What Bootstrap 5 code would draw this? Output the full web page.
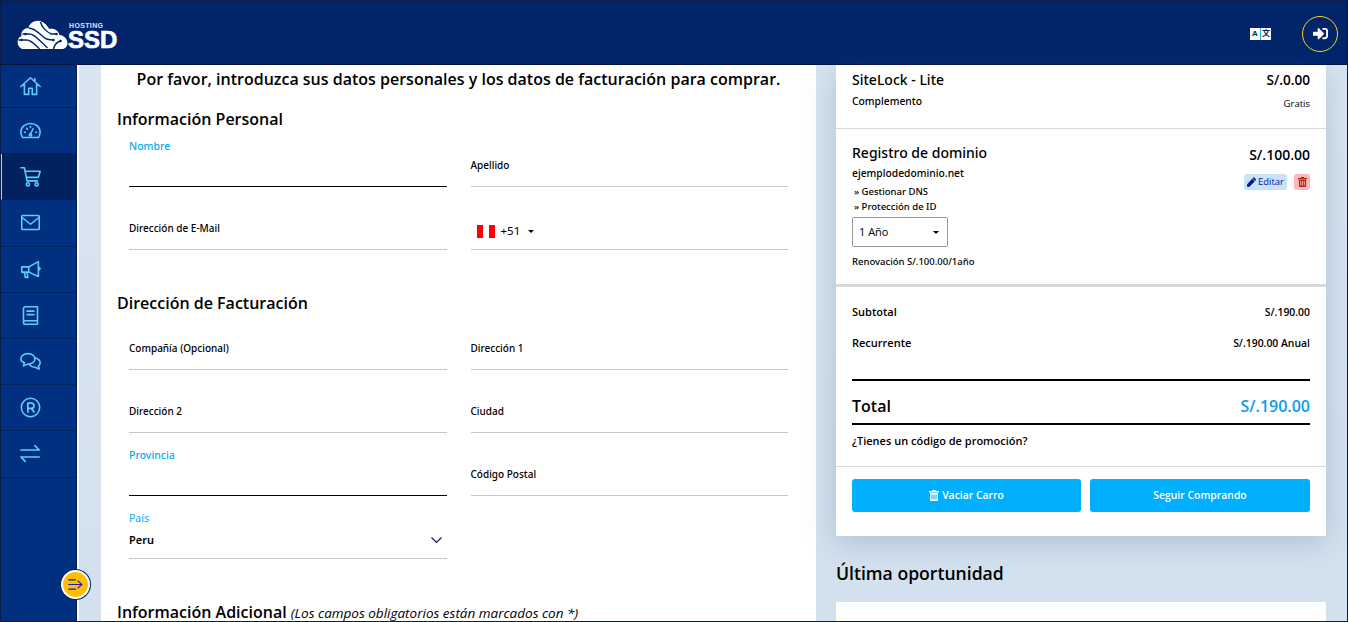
<!DOCTYPE html>
<html lang="es">
<head>
<meta charset="utf-8">
<title>Hosting SSD</title>
<link href="https://cdn.jsdelivr.net/npm/bootstrap@5.3.0/dist/css/bootstrap.min.css" rel="stylesheet">
<style>
html,body{height:622px;overflow:hidden}
body{font-family:"Open Sans","Noto Sans",sans-serif;color:#000;background:#d6e3ef}
.frame{height:622px;display:flex;flex-direction:column;border:1px solid #0b1d4a;overflow:hidden}
.topbar{height:64px;flex:none;background:#01246b;padding:2px 0 0;border-bottom:1px solid #00143f}
.logo-wrap{position:relative;display:flex;align-items:flex-end;margin-left:15px;height:30px;margin-top:1px}
.logo-host{position:absolute;left:53px;top:3px;font:700 7px/8px "Liberation Sans",sans-serif;color:#cfe6ff;letter-spacing:.35px}
.logo-ssd{font:700 24px/18px "Liberation Sans",sans-serif;color:#fff;letter-spacing:0;margin-left:-1px;-webkit-text-stroke:.7px #fff}
.lang{display:flex;width:21px;height:12px;background:#fff;font:700 8px/12px "Liberation Sans","Noto Sans CJK SC",sans-serif;color:#01246b;text-align:center;margin-right:31px}
.lang span{flex:1}
.lang span+span{border-left:1px solid #27b6e8}
.login{width:36px;height:36px;border:1.5px solid #ffd21e;border-radius:50%;display:flex;align-items:center;justify-content:center;margin-right:9px}
.below{flex:1;display:flex;min-height:0;position:relative}
.side{width:78px;flex:none;background:#00307f;border-right:2px solid #fff;box-shadow:inset -1px 0 0 #001f63}
.side .nav-link{height:46.2px;padding:0 0 0 19px;display:flex;align-items:center;border-bottom:1px solid #00225f}
.side .nav-link:first-child{height:43px}
.side .nav-link.active{background:#01225f;border-left:1px solid #ffd21e;padding-left:18px}
.side svg{width:21px;height:21px;fill:none;stroke:#5fcbff;stroke-width:1.8;stroke-linecap:round;stroke-linejoin:round}
.toggle{position:absolute;left:60px;top:505px;width:29px;height:29px;border-radius:50%;background:#ffbe00;border:2px solid #fff;box-shadow:0 0 0 1px #00225f;display:flex;align-items:center;justify-content:center}
.toggle svg{width:15px;height:11px;fill:none;stroke:#1420c8;stroke-width:1.3}
.content{flex:1;display:flex;min-width:0;padding-left:22px;background:linear-gradient(180deg,#d9e5f0,#d3e1ee)}
.panel{width:715px;flex:none;background:#fff;border:0;border-radius:0;padding:0 16px}
.page-lead{font-size:16px;font-weight:600;line-height:22px;text-align:center;margin:3px 0 0}
.sec-title{font-size:16px;font-weight:600;line-height:22px;margin:0}
.sec-title em{font-size:13.5px;font-weight:400}
.s1{margin-top:18px}.s2{margin-top:42px}.s3{margin-top:42px}
.r1{margin-top:-3px}.r2{margin-top:-7px}
.fld{height:63px;border-bottom:1px solid #c8c8c8;display:flex;align-items:flex-end;padding-bottom:14px;font-family:"Noto Sans","Open Sans",sans-serif;font-size:10px;font-weight:500;line-height:14px}
.fld.short{height:60px}
.fld.on{border-bottom-color:#000;padding-bottom:33px;color:#00aeef;font-size:10.5px}
.fld.pais{flex-direction:column;align-items:flex-start;justify-content:flex-end;padding-bottom:10px;color:#00aeef;font-weight:400;font-size:10.5px;position:relative}
.fld.pais b{color:#000;font-size:11px;font-weight:600;line-height:16px;margin-top:7px}
.chev{position:absolute;right:5px;bottom:14px;width:11px;height:7px;fill:none;stroke:#0b1d4a;stroke-width:1.2}
.fld.tel{align-items:center;padding:26px 0 0 6px;font-size:11.5px;font-weight:400;gap:6px}
.flag{display:flex;width:18px;height:13px}
.flag i{flex:1;background:#f00}
.flag i+i{background:#fff}
.flag i+i+i{background:#f00}
.caret{width:0;height:0;border:3px solid transparent;border-top-color:#000;border-bottom:0;margin-left:2px}
.aside{width:490px;flex:none;margin-left:20px}
.cart{border:0;border-radius:0;box-shadow:0 6px 28px rgba(70,100,140,.28);height:471px}
.itm{padding:0 16px;display:flex;justify-content:space-between;border-bottom:1px solid #d9d9d9}
.itm1{height:64px;padding-top:5px}
.itm2{height:158px;padding-top:14px;border-bottom:3px solid #d9d9d9}
.nm{font-family:"Noto Sans","Open Sans",sans-serif;font-size:14px;font-weight:500;line-height:20px}
.tiny{font-family:"Noto Sans","Open Sans",sans-serif;font-size:9.5px;line-height:14px;font-weight:500}
.tiny.wide{font-size:10.3px}
.pr{font-size:13.6px;font-weight:600;line-height:20px;text-align:right}
.pr.big{font-size:14px;margin-top:2px}
.gratis{font-size:9.5px;text-align:right;margin-top:7px}
.mini{display:inline-flex;align-items:center;gap:2px;height:16px;border-radius:3px;font-size:9.5px;padding:0 3px;background:#c5e3fb;color:#0a1a8a}
.mini.del{background:#ffb6bd;padding:0 3px;margin-left:7px;color:#b3260a;width:16px;justify-content:center}
.mini svg{width:9px;height:10px;fill:currentColor}
.btns{margin-top:4px}
.term{width:96px;height:30px;border:1px solid #999;border-radius:2px;display:flex;justify-content:space-between;align-items:center;padding:0 8px 0 6px;font-size:11px;margin:3px 0 8px;background:#fff}
.sums{padding:0 16px}
.sum{display:flex;justify-content:space-between;font-size:11px;font-weight:600;line-height:16px}
.sum small{font-size:10.4px;font-weight:600}
.sum1{margin-top:17px}.sum2{margin-top:15px}
.tot{display:flex;justify-content:space-between;align-items:center;border-top:2px solid #000;border-bottom:2px solid #000;height:46px;padding-top:8px;font-size:16px;font-weight:600;margin-top:28px}
.tot span+span{color:#0a9bf5}
.promo{font-size:11px;font-weight:600;line-height:16px;margin-top:8px;padding-bottom:17px}
.acts{border-top:1px solid #d9d9d9;padding:12px 16px 0;display:flex;gap:9px}
.act{height:33px;border:0;border-radius:3px;background:#00b0ff;color:#fff;font-size:10.4px;font-weight:600;padding:0;display:flex;align-items:center;justify-content:center;gap:3px}
.act svg{width:10px;height:11px;fill:#fff}
.a1{width:229px}.a2{width:220px}
.last-title{font-size:17.6px;font-weight:600;line-height:24px;margin:25px 0 17px}
.next{height:40px;background:#fff;border:0;border-radius:0}
.m3{margin-top:3px}.m4{margin:5px 0 0 2px}.m1{margin:1px 0 0 2px}
.mtc{margin-top:4px}
</style>
</head>
<body>
<div class="frame">
  <nav class="navbar topbar d-flex justify-content-between align-items-center">
    <div class="logo-wrap">
      <svg width="53" height="30" viewBox="0 0 52 30"><path d="M4 29C0 26 0 19 5 17 4 12 8 9 12 9 13 3 21 0 26 3c4 2 5 5 7 7 5-1 9 2 10 6 4 0 8 4 8 8 0 4-3 6-6 6H8c-2 0-3 0-4-1z" fill="#fff"/><g fill="none" stroke="#01246b" stroke-width="1.400"><path d="M2 21h8c4 0 7 3 10 6l3 3M6 15h7c5 0 9 6 14 10l4 4M12 9c6 0 10 5 15 9 3 3 6 3 10 3M24 3c1 5 6 10 11 12h5M44 22c-4 1-6 4-7 8"/></g><g fill="#01246b"><circle cx="5" cy="21" r="1.300"/><circle cx="9" cy="15" r="1.300"/><circle cx="37" cy="21" r="1.300"/><circle cx="40" cy="15" r="1.300"/><circle cx="44" cy="22" r="1.300"/></g></svg>
      <span class="logo-host">HOSTING</span>
      <span class="logo-ssd">SSD</span>
    </div>
    <div class="d-flex align-items-center">
      <div class="lang"><span>A</span><span>文</span></div>
      <div class="login"><svg width="17" height="15" viewBox="0 0 512 512" fill="#fff"><path d="M416 448h-84c-6.6 0-12-5.4-12-12v-40c0-6.6 5.4-12 12-12h84c17.7 0 32-14.3 32-32V160c0-17.7-14.3-32-32-32h-84c-6.6 0-12-5.4-12-12V76c0-6.6 5.4-12 12-12h84c53 0 96 43 96 96v192c0 53-43 96-96 96zm-47-201L201 79c-15-15-41-4.5-41 17v96H24c-13.3 0-24 10.7-24 24v96c0 13.3 10.7 24 24 24h136v96c0 21.5 26 32 41 17l168-168c9.3-9.4 9.3-24.6 0-34z"/></svg></div>
    </div>
  </nav>
  <div class="below">
    <div class="side nav flex-column">
      <a class="nav-link" href="#"><svg viewBox="0 0 24 24"><path d="M1 12 12 2l11 10M5 9v12h5v-7h4v7h5V9M17 3v3"/></svg></a>
      <a class="nav-link" href="#"><svg viewBox="0 0 24 24"><path d="M3 20C1 17 1 15 1 14 1 8 6 4 12 4s11 4 11 10c0 1 0 3-2 6zM12 16l3-6M5 14h1M18 14h1M7.500 9.500l1 1M12 7.500v1"/><circle cx="12" cy="17" r="1.300"/></svg></a>
      <a class="nav-link active" href="#"><svg viewBox="0 0 24 24"><path d="M1 2h4l3 15h12M6 6h17l-2 7H7.500"/><circle cx="9" cy="21" r="1.800"/><circle cx="19" cy="21" r="1.800"/></svg></a>
      <a class="nav-link" href="#"><svg viewBox="0 0 24 24"><rect x="2" y="4" width="20" height="16" rx="1"/><path d="m2 6 10 8 10-8"/></svg></a>
      <a class="nav-link" href="#"><svg viewBox="0 0 24 24"><path d="M2 9h8l11-6v17l-11-5H2zM10 9v6M5 15l1 6h3l-1-6M21 9l2 2-2 2"/></svg></a>
      <a class="nav-link" href="#"><svg viewBox="0 0 24 24"><path d="M4 20V4a2 2 0 0 1 2-2h14v16H6a2 2 0 0 0 0 4h14v-4M8 7h8M8 11h8"/></svg></a>
      <a class="nav-link" href="#"><svg viewBox="0 0 24 24"><path d="M9 3c4.500 0 8 2.700 8 6s-3.500 6-8 6l-5 2 1-3.500C2.500 12.500 1 11 1 9c0-3.300 3.500-6 8-6zM18 8c3 1 5 3 5 5.500 0 1.500-.8 2.800-2 3.700l1 3.300-5-2c-2.500 0-4.500-.8-6-2.500"/></svg></a>
      <a class="nav-link" href="#"><svg viewBox="0 0 24 24"><circle cx="12" cy="12" r="10.500"/><path stroke-width="2" d="M9 17V7h4a3 3 0 0 1 0 6H9M13 13l3 4"/></svg></a>
      <a class="nav-link" href="#"><svg viewBox="0 0 24 24"><path d="M1 8h21M17 3l5 5M1 16h21M1 16l5 5"/></svg></a>
    </div>
    <div class="toggle"><svg viewBox="0 0 17 13"><path d="M0 1h9M0 6.500h15M0 12h9M11 2l5 4.500-5 4.500"/></svg></div>
    <main class="content">
      <div class="card panel">
        <p class="page-lead">Por favor, introduzca sus datos personales y los datos de facturación para comprar.</p>
        <h2 class="sec-title s1">Información Personal</h2>
        <div class="row mx-0 r1">
          <div class="col-6"><div class="fld short on">Nombre</div></div>
          <div class="col-6"><div class="fld short">Apellido</div></div>
          <div class="col-6"><div class="fld">Dirección de E-Mail</div></div>
          <div class="col-6"><div class="fld tel"><span class="flag"><i></i><i></i><i></i></span><span>+51</span><span class="caret"></span></div></div>
        </div>
        <h2 class="sec-title s2">Dirección de Facturación</h2>
        <div class="row mx-0 r2">
          <div class="col-6"><div class="fld">Compañía (Opcional)</div></div>
          <div class="col-6"><div class="fld">Dirección 1</div></div>
          <div class="col-6"><div class="fld">Dirección 2</div></div>
          <div class="col-6"><div class="fld">Ciudad</div></div>
          <div class="col-6"><div class="fld on">Provincia</div></div>
          <div class="col-6"><div class="fld">Código Postal</div></div>
          <div class="col-6"><div class="fld pais">País<b>Peru</b><svg class="chev" viewBox="0 0 11 7"><path d="m.5.5 5 5 5-5"/></svg></div></div>
        </div>
        <h2 class="sec-title s3">Información Adicional <em>(Los campos obligatorios están marcados con *)</em></h2>
      </div>
      <aside class="aside">
        <div class="card cart">
          <div class="itm itm1">
            <div><div class="nm">SiteLock - Lite</div><div class="tiny wide mtc">Complemento</div></div>
            <div><div class="pr">S/.0.00</div><div class="gratis">Gratis</div></div>
          </div>
          <div class="itm itm2">
            <div>
              <div class="nm">Registro de dominio</div>
              <div class="tiny wide m3">ejemplodedominio.net</div>
              <div class="tiny m4">» Gestionar DNS</div>
              <div class="tiny m1">» Protección de ID</div>
              <div class="term"><span>1 Año</span><span class="caret"></span></div>
              <div class="tiny">Renovación S/.100.00/1año</div>
            </div>
            <div class="text-end">
              <div class="pr big">S/.100.00</div>
              <div class="btns"><span class="mini"><svg viewBox="0 0 512 512"><path d="M290 74 438 222 116 544 0 512l-4-116zM343 21c25-25 65-25 90 0l58 58c25 25 25 65 0 90l-30 30L313 51z"/></svg>Editar</span><span class="mini del"><svg viewBox="0 0 10 11"><path d="M3.500 0h3l.5 1h3v1.500H0V1h3zM1 3h8v7a1 1 0 0 1-1 1H2a1 1 0 0 1-1-1zm1.500 1.500V9.500h1V4.500zm2 0V9.500h1V4.500zm2 0V9.500h1V4.500z"/></svg></span></div>
            </div>
          </div>
          <div class="sums">
            <div class="sum sum1"><span>Subtotal</span><small>S/.190.00</small></div>
            <div class="sum sum2"><span>Recurrente</span><small>S/.190.00 Anual</small></div>
            <div class="tot"><span>Total</span><span>S/.190.00</span></div>
            <div class="promo">¿Tienes un código de promoción?</div>
          </div>
          <div class="acts">
            <button class="btn act a1" type="button"><svg viewBox="0 0 10 11"><path d="M3.500 0h3l.5 1h3v1.500H0V1h3zM1 3h8v7a1 1 0 0 1-1 1H2a1 1 0 0 1-1-1zm1.500 1.500V9.500h1V4.500zm2 0V9.500h1V4.500zm2 0V9.500h1V4.500z"/></svg> Vaciar Carro</button>
            <button class="btn act a2" type="button">Seguir Comprando</button>
          </div>
        </div>
        <h3 class="last-title">Última oportunidad</h3>
        <div class="card next"></div>
      </aside>
    </main>
  </div>
</div>
<script src="https://cdn.jsdelivr.net/npm/bootstrap@5.3.0/dist/js/bootstrap.bundle.min.js"></script>
</body>
</html>
